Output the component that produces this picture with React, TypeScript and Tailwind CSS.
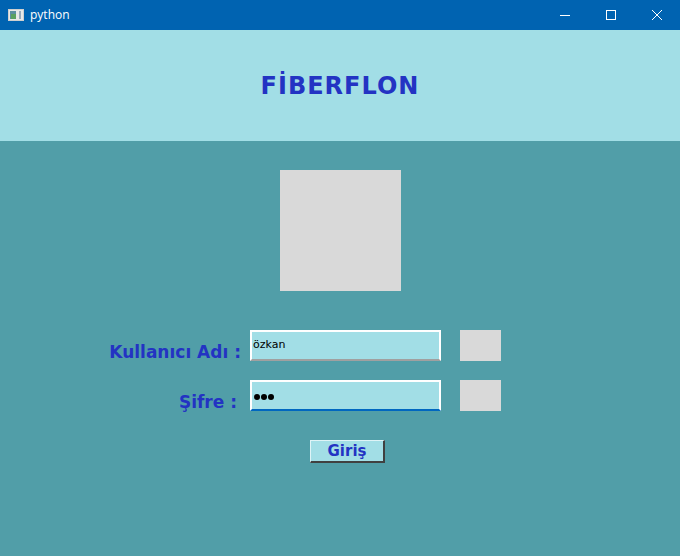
import React from "react";

export default function App() {
  const blue = "text-[#2333c3]";

  return (
    <div className="w-[680px] h-[556px] flex flex-col overflow-hidden font-['DejaVu_Sans',sans-serif]">
      {/* window title bar */}
      <div className="h-[30px] bg-[#0063b1] flex items-center text-white">
        <div className="ml-[8px] w-[16px] h-[12px] flex">
          <svg width="16" height="12" viewBox="0 0 16 12">
            <rect x="0.5" y="0.5" width="15" height="11" fill="#e8e8e8" stroke="#cfcfcf" />
            <rect x="2" y="2" width="6" height="8" fill="#5c8fa0" />
            <rect x="3" y="5" width="5" height="5" fill="#5aa060" />
            <rect x="11" y="2" width="2" height="8" fill="#9ab" />
          </svg>
        </div>
        <span className="ml-[6px] text-[12px] font-['Open_Sans',sans-serif]">python</span>
        <div className="ml-auto flex items-center h-full">
          <div className="w-[46px] h-full flex items-center justify-center">
            <svg width="10" height="10" viewBox="0 0 10 10">
              <line x1="0" y1="5.5" x2="10" y2="5.5" stroke="white" strokeWidth="1" />
            </svg>
          </div>
          <div className="w-[46px] h-full flex items-center justify-center">
            <svg width="10" height="10" viewBox="0 0 10 10">
              <rect x="0.5" y="0.5" width="9" height="9" fill="none" stroke="white" strokeWidth="1" />
            </svg>
          </div>
          <div className="w-[46px] h-full flex items-center justify-center">
            <svg width="10" height="10" viewBox="0 0 10 10">
              <path d="M0 0 L10 10 M10 0 L0 10" stroke="white" strokeWidth="1" />
            </svg>
          </div>
        </div>
      </div>

      {/* header */}
      <div className="h-[111px] bg-[#a2dee6] flex items-center justify-center">
        <h1 className={`text-[24px] font-bold tracking-[1px] ${blue}`}>FİBERFLON</h1>
      </div>

      {/* body */}
      <div className="flex-1 bg-[#519ea8] flex flex-col">
        <div className="mt-[29px] ml-[280px] w-[121px] h-[121px] bg-[#d9d9d9]" />

        <div className="mt-[39px] flex items-start h-[31px]">
          <div className={`w-[241px] h-[31px] text-right text-[17px] leading-[20px] font-bold ${blue} pt-[12px] whitespace-nowrap`}>
            Kullanıcı Adı :
          </div>
          <div className="ml-[9px] w-[191px] h-[31px] bg-[#a2dee6] border-t-2 border-l-2 border-r-2 border-white border-b-2 border-b-[#a0a0a0] flex items-center">
            <span className="ml-[1px] text-[11px] text-black">özkan</span>
          </div>
          <div className="ml-[19px] w-[41px] h-[31px] bg-[#d9d9d9]" />
        </div>

        <div className="mt-[19px] flex items-start h-[31px]">
          <div className={`w-[237px] h-[31px] text-right text-[17px] leading-[20px] font-bold ${blue} pt-[12px] whitespace-nowrap`}>
            Şifre :
          </div>
          <div className="ml-[13px] w-[191px] h-[31px] bg-[#a2dee6] border-t-2 border-l-2 border-r-2 border-white border-b-2 border-b-[#0067c0] flex items-center gap-[1px] pl-[2px] pt-[2px]">
            <span className="w-[6px] h-[6px] rounded-full bg-black" />
            <span className="w-[6px] h-[6px] rounded-full bg-black" />
            <span className="w-[6px] h-[6px] rounded-full bg-black" />
          </div>
          <div className="ml-[19px] w-[41px] h-[31px] bg-[#d9d9d9]" />
        </div>

        <div className="mt-[29px] ml-[310px]">
          <button className={`w-[75px] h-[23px] bg-[#a2dee6] border-t border-l border-[#dff4f7] border-r-2 border-b-2 border-r-[#404040] border-b-[#404040] text-[15px] font-bold ${blue} flex items-center justify-center`}>
            Giriş
          </button>
        </div>
      </div>
    </div>
  );
}
